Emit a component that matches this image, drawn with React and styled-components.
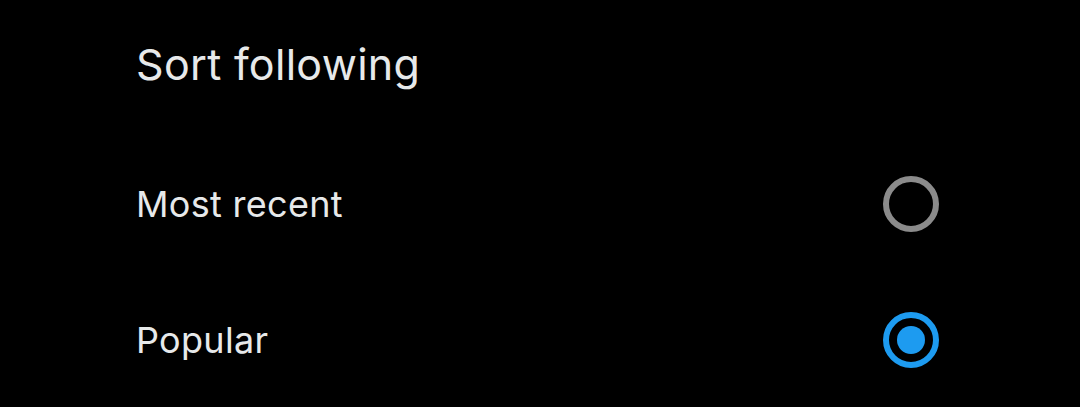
import React, { useState } from "react";
import styled, { createGlobalStyle } from "styled-components";

const GlobalStyle = createGlobalStyle`
  html, body {
    margin: 0;
    background: #000;
  }
  body {
    font-family: Inter, "Noto Sans", sans-serif;
    color: #e7e9ea;
  }
`;

const Sheet = styled.div`
  width: 1080px;
  height: 407px;
  background: #000;
  padding: 0 141px 0 136px;
  box-sizing: border-box;
  overflow: hidden;
`;

const Title = styled.h2`
  margin: 0;
  padding-top: 38px;
  height: 136px;
  box-sizing: border-box;
  font-size: 43px;
  font-weight: 400;
  line-height: 52px;
  letter-spacing: 0.3px;
`;

const Option = styled.label`
  display: flex;
  align-items: center;
  justify-content: space-between;
  height: 136px;
  cursor: pointer;
`;

const OptionLabel = styled.span`
  font-size: 36px;
  line-height: 44px;
  letter-spacing: 0.3px;
`;

const Radio = styled.span`
  width: 56px;
  height: 56px;
  box-sizing: border-box;
  border-radius: 50%;
  border: 6px solid ${(p) => (p.checked ? "#1d9bf0" : "#8b8b8b")};
  display: flex;
  align-items: center;
  justify-content: center;

  &::after {
    content: "";
    width: 28px;
    height: 28px;
    border-radius: 50%;
    background: #1d9bf0;
    display: ${(p) => (p.checked ? "block" : "none")};
  }
`;

const options = ["Most recent", "Popular"];

const App = () => {
  const [sort, setSort] = useState("Popular");

  return (
    <>
      <GlobalStyle />
      <Sheet>
        <Title>Sort following</Title>
        {options.map((opt) => (
          <Option key={opt} onClick={() => setSort(opt)}>
            <OptionLabel>{opt}</OptionLabel>
            <Radio checked={sort === opt} />
          </Option>
        ))}
      </Sheet>
    </>
  );
};

export default App;
